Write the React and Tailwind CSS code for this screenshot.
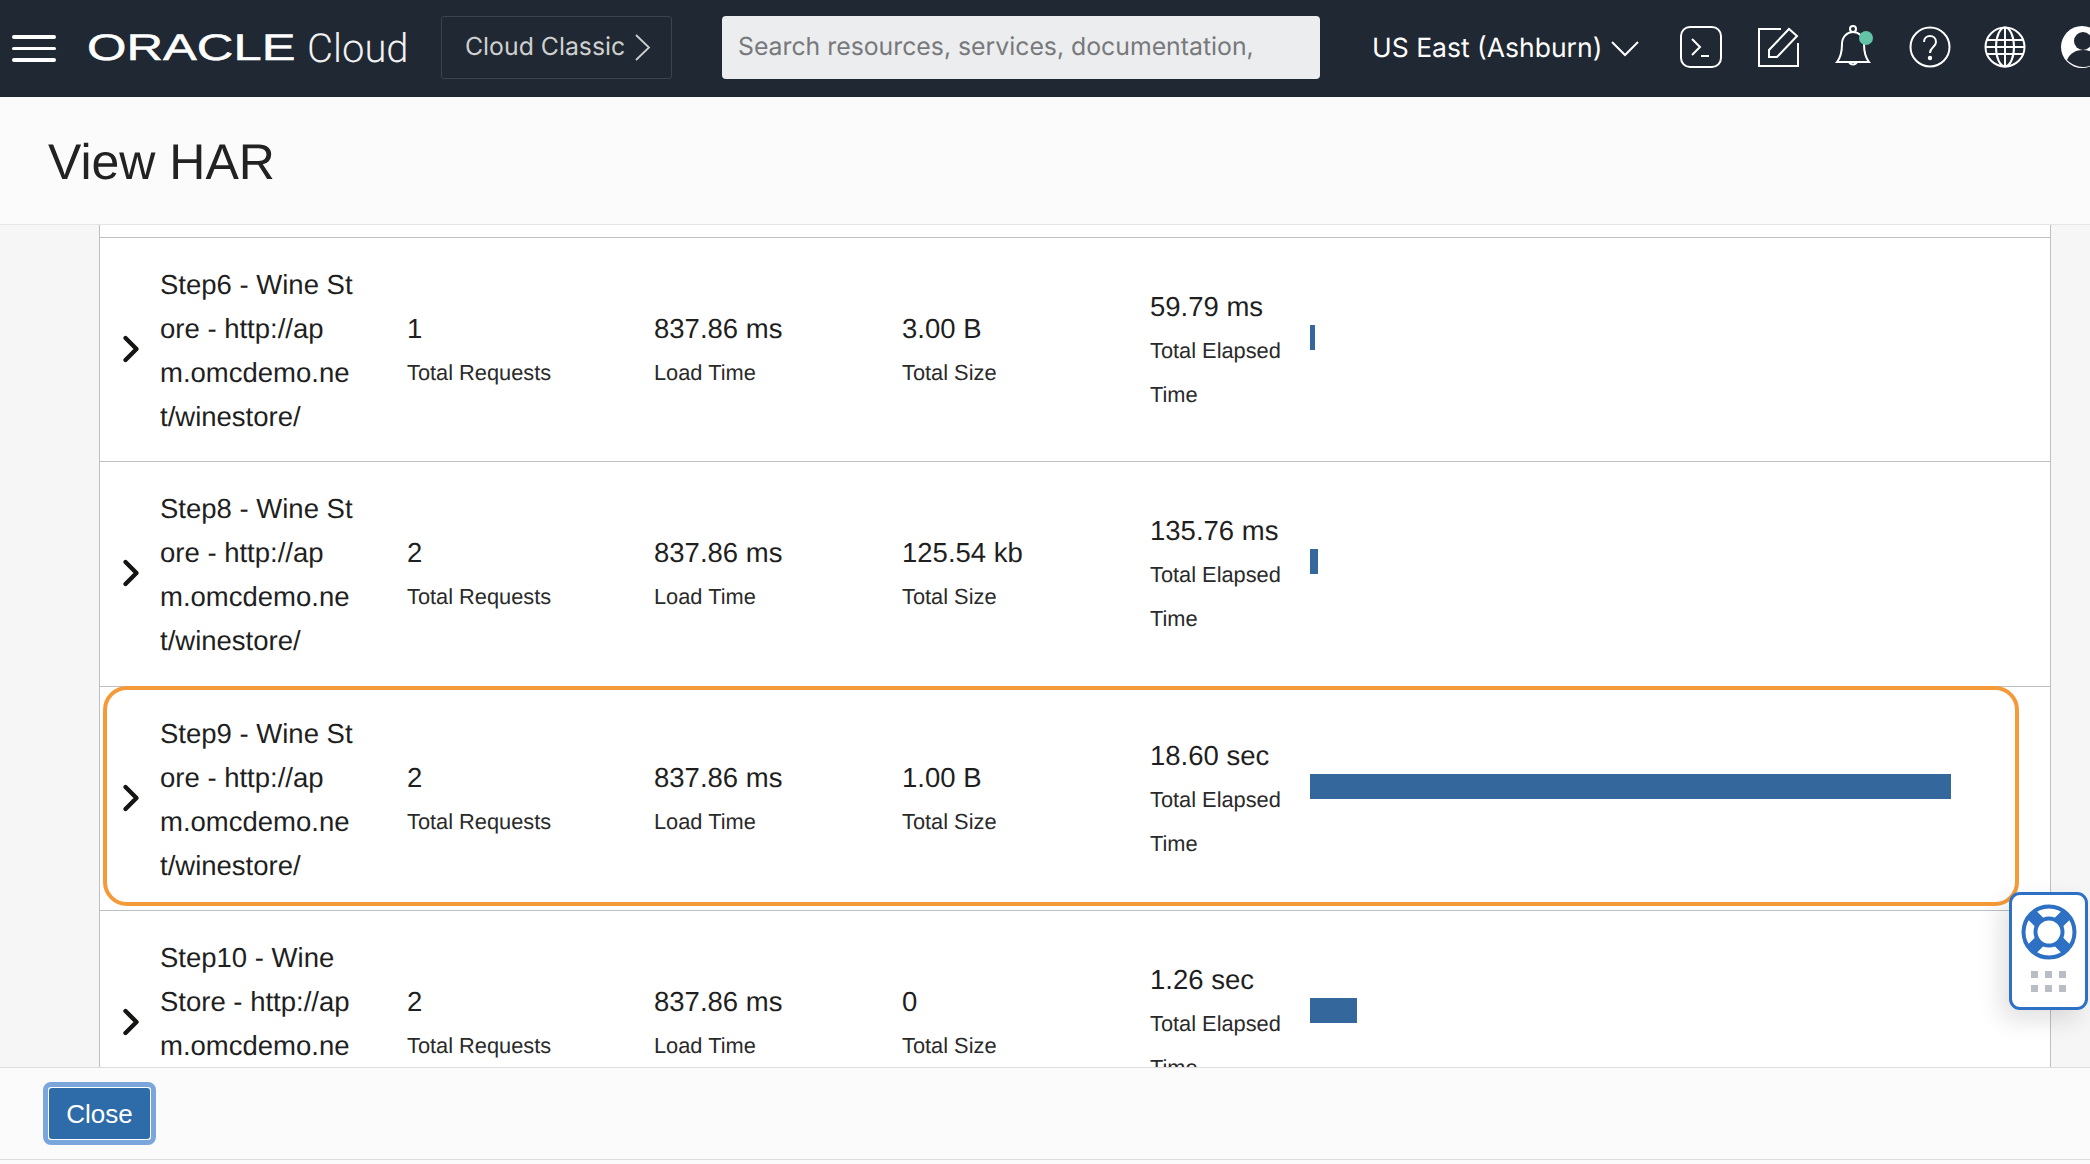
import { ChevronRight } from 'lucide-react'

const rows = [
  { name: ['Step6 - Wine St', 'ore - http://ap', 'm.omcdemo.ne', 't/winestore/'], requests: '1', load: '837.86 ms', size: '3.00 B', elapsed: '59.79 ms', barWidth: 5 },
  { name: ['Step8 - Wine St', 'ore - http://ap', 'm.omcdemo.ne', 't/winestore/'], requests: '2', load: '837.86 ms', size: '125.54 kb', elapsed: '135.76 ms', barWidth: 8 },
  { name: ['Step9 - Wine St', 'ore - http://ap', 'm.omcdemo.ne', 't/winestore/'], requests: '2', load: '837.86 ms', size: '1.00 B', elapsed: '18.60 sec', barWidth: 641 },
  { name: ['Step10 - Wine', 'Store - http://ap', 'm.omcdemo.ne', 't/winestore/'], requests: '2', load: '837.86 ms', size: '0', elapsed: '1.26 sec', barWidth: 47 },
]

function Stat({ value, label, width }) {
  return (
    <div className={`${width} shrink-0`}>
      <div className="text-[27.5px] leading-[44px] text-[#1f1f1f]">{value}</div>
      <div className="text-[21.8px] leading-[44px] text-[#2a2a2a]">{label}</div>
    </div>
  )
}

function Row({ row }) {
  return (
    <div className="flex h-[224.3px] shrink-0 items-center border-b border-[#bcbfc4] pt-[3px]">
      <div className="mb-[4px] w-[60px] shrink-0 pl-[9px]">
        <ChevronRight className="h-[44px] w-[44px] text-[#161513]" strokeWidth={2.4} />
      </div>
      <div className="w-[247px] shrink-0 text-[27.5px] leading-[44px] text-[#1f1f1f]">
        {row.name.map((line, i) => (
          <div key={i}>{line}</div>
        ))}
      </div>
      <Stat value={row.requests} label="Total Requests" width="w-[247px]" />
      <Stat value={row.load} label="Load Time" width="w-[248px]" />
      <Stat value={row.size} label="Total Size" width="w-[248px]" />
      <div className="w-[160px] shrink-0">
        <div className="text-[27.5px] leading-[44px] text-[#1f1f1f]">{row.elapsed}</div>
        <div className="text-[21.8px] leading-[44px] text-[#2a2a2a]">Total Elapsed</div>
        <div className="text-[21.8px] leading-[44px] text-[#2a2a2a]">Time</div>
      </div>
      <div className="mb-[27px] h-[25px] bg-[#34689c]" style={{ width: row.barWidth }} />
    </div>
  )
}

function HeaderIcons() {
  return (
    <div className="-mt-[3px] ml-[41px] flex items-center gap-[35px] text-white">
      <svg width="42" height="42" viewBox="0 0 42 42" fill="none" stroke="currentColor" strokeWidth="2">
        <rect x="1" y="1" width="40" height="40" rx="9" />
        <path d="M12 13l8 8-8 8M21 30h8" />
      </svg>
      <svg width="44" height="42" viewBox="0 0 44 42" fill="none" stroke="currentColor" strokeWidth="2">
        <path d="M24 3H2v37h39V17" />
        <path d="M12 24L32 3l8 7-20 21H12z" />
      </svg>
      <svg width="42" height="44" viewBox="0 0 42 44" fill="none" stroke="currentColor" strokeWidth="2" className="-ml-[2px]">
        <path d="M3 37c4-5 5-10 5-18 0-7 5-12 11-12s11 5 11 12c0 8 1 13 5 18H3z" />
        <circle cx="19" cy="4" r="3" />
        <path d="M15 37a4.500 4.500 0 008 0" />
        <circle cx="32" cy="13" r="7" fill="#64c3a6" stroke="none" />
      </svg>
      <svg width="42" height="42" viewBox="0 0 42 42" fill="none" stroke="currentColor" strokeWidth="2" className="-ml-[2px]">
        <circle cx="21" cy="21" r="19.500" />
        <path d="M15 16c0-4 3-6 6-6s6 2 6 6c0 5-6 5-6 11" />
        <circle cx="21" cy="32" r="1.200" fill="currentColor" />
      </svg>
      <svg width="42" height="42" viewBox="0 0 42 42" fill="none" stroke="currentColor" strokeWidth="2" className="-ml-[2px]">
        <circle cx="21" cy="21" r="19.500" />
        <ellipse cx="21" cy="21" rx="9" ry="19.500" />
        <path d="M21 1v40M3 14h36M3 28h36M1 21h40" />
      </svg>
      <svg width="44" height="42" viewBox="0 0 44 42" className="shrink-0">
        <circle cx="21" cy="21" r="21" fill="#ffffff" />
        <circle cx="22" cy="15" r="9" fill="#202833" />
        <path d="M6 34c3-7 9-10 16-10s13 3 16 10c-4 4-10 7-16 7s-12-3-16-7z" fill="#202833" />
      </svg>
    </div>
  )
}

function HelpWidget() {
  return (
    <div className="absolute left-[2009px] top-[892px] flex h-[118px] w-[79px] flex-col items-center rounded-[11px] border-[3px] border-[#2d70c4] bg-white pt-[9px] shadow-[-8px_10px_24px_rgba(0,0,0,0.12)]">
      <svg width="56" height="56" viewBox="0 0 56 56" fill="none">
        <circle cx="28" cy="28" r="25.500" stroke="#2d70c4" strokeWidth="4" />
        <circle cx="28" cy="28" r="13.500" stroke="#2d70c4" strokeWidth="4" />
        <path d="M10 10l8.500 8.500M46 10l-8.500 8.500M10 46l8.500-8.500M46 46l-8.500-8.500" stroke="#2d70c4" strokeWidth="12" />
      </svg>
      <div className="mt-[11px] grid grid-cols-3 gap-x-[7px] gap-y-[7px]">
        {[0, 1, 2, 3, 4, 5].map((i) => (
          <div key={i} className="h-[7px] w-[7px] bg-[#b9bdc6]" />
        ))}
      </div>
    </div>
  )
}

export default function App() {
  return (
    <div className="relative flex h-screen flex-col overflow-hidden bg-[#fbfbfb] font-['Liberation_Sans',Arial,sans-serif] [text-rendering:geometricPrecision]">
      <header className="flex h-[97px] shrink-0 items-center overflow-hidden bg-[#202833] pl-[12px]">
        <div className="flex w-[44px] shrink-0 flex-col gap-[8px]">
          <div className="h-[3.500px] rounded-full bg-white" />
          <div className="h-[3.500px] rounded-full bg-white" />
          <div className="h-[3.500px] rounded-full bg-white" />
        </div>
        <div className="ml-[31px] w-[220px] shrink-0 whitespace-nowrap">
          <span className="inline-block origin-left scale-x-[1.37] text-[37px] leading-none text-white [-webkit-text-stroke:0.5px_white]">ORACLE</span>
        </div>
        <span className="w-[134px] shrink-0 font-['Roboto',sans-serif] text-[40px] font-light leading-none text-[#f1f1f1]">Cloud</span>
        <div className="-mt-[3px] flex h-[63px] w-[231px] shrink-0 items-center rounded-[3px] border border-[#3a4350] pl-[23px] font-['Inter',sans-serif] text-[24.8px] text-[#cfcfcf]">
          Cloud Classic
          <svg width="17" height="27" viewBox="0 0 17 27" fill="none" stroke="currentColor" strokeWidth="1.800" className="ml-[9px]">
            <path d="M2 1l13 12.500L2 26" />
          </svg>
        </div>
        <div className="-mt-[3px] ml-[50px] flex h-[63px] w-[598px] shrink-0 items-center rounded-[4px] bg-[#ecedee] pl-[16px] font-['Inter',sans-serif] text-[24.8px] text-[#77797c]">
          Search resources, services, documentation,
        </div>
        <span className="ml-[52px] shrink-0 font-['Inter',sans-serif] text-[26.5px] text-white">US East (Ashburn)</span>
        <svg width="28" height="16" viewBox="0 0 28 16" fill="none" stroke="#ffffff" strokeWidth="2" className="ml-[9px] shrink-0">
          <path d="M1 1l13 13L27 1" />
        </svg>
        <HeaderIcons />
      </header>

      <div className="flex h-[128px] shrink-0 items-center border-b border-[#e4e5e6] pl-[48px] pt-[3px]">
        <h1 className="text-[50px] font-normal leading-none text-[#222222]">View HAR</h1>
      </div>

      <main className="min-h-0 flex-1 overflow-hidden bg-[#f6f6f6] pl-[99px] pr-[39px]">
        <div className="flex h-full flex-col border-x border-[#bcbfc4] bg-white pt-[12px]">
          <div className="border-b border-[#bcbfc4]" />
          {rows.map((row) => (
            <Row key={row.name[0]} row={row} />
          ))}
        </div>
      </main>

      <footer className="mb-[4px] flex h-[93px] shrink-0 items-center border-y border-[#dcdddf] bg-[#fbfbfb] pl-[43px]">
        <button className="h-[63px] w-[113px] rounded-[8px] border-[5px] border-[#7ba6dc] bg-white p-[1px]">
          <span className="flex h-full w-full items-center justify-center rounded-[3px] bg-[#2d6ca8] pt-[1px] text-[26px] text-white">Close</span>
        </button>
      </footer>

      <div className="pointer-events-none absolute left-[103px] top-[686px] h-[220px] w-[1916px] rounded-[24px] border-4 border-[#f59a38]" />
      <HelpWidget />
    </div>
  )
}
